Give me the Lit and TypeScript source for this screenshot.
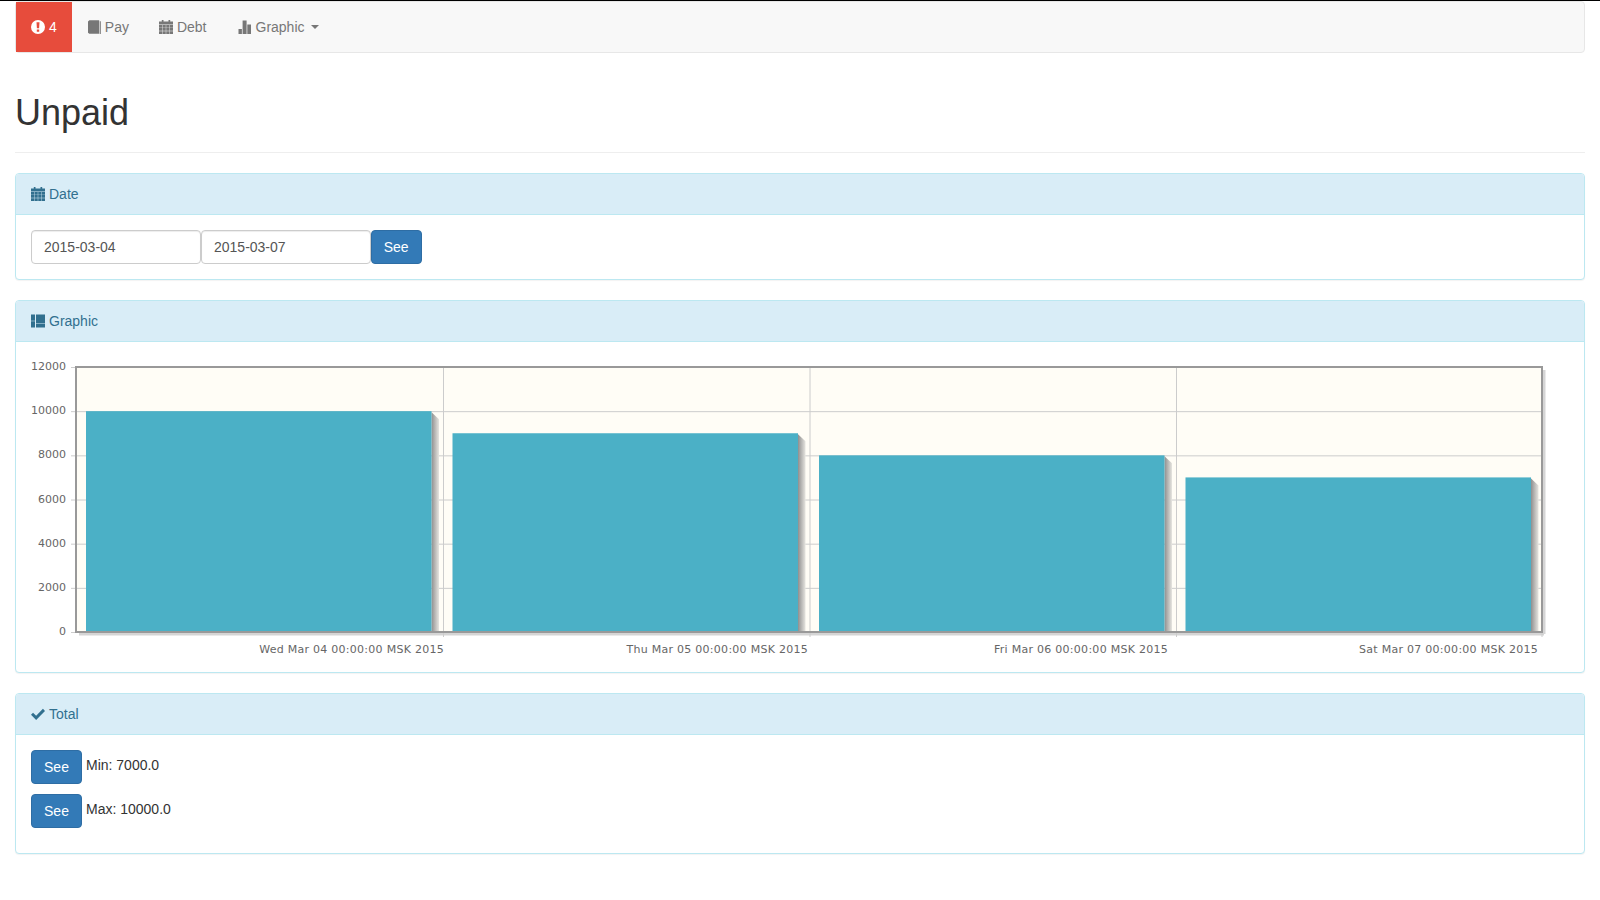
import { LitElement, html, css, svg } from 'lit';
import { customElement } from 'lit/decorators.js';

// icons, drawn to match the reference glyphs
const iconExclaim = html`<svg class="ic" viewBox="0 0 14 14"><path fill-rule="evenodd" d="M7 0a7 7 0 1 0 0 14A7 7 0 0 0 7 0zM5.500 2.300h3l-.4 6H5.900zM5.800 9.400h2.400v2.300H5.800z"/></svg>`;
const iconBook = html`<svg class="ic" viewBox="0 0 14 14"><path d="M1 1.400 2.400.3h9.800v13.400H2.300L1 12.700zM12.800 1.200h1V14h-1z"/></svg>`;
const iconCal = html`<svg class="ic" viewBox="0 0 14 14"><path d="M2.800 0h1.700v1.600h5V0h1.700v1.600H14v2.900H0V1.600h2.800zM0 5h3.300v2.700H0zM3.700 5h3.100v2.700H3.700zM7.200 5h3.100v2.700H7.200zM10.700 5H14v2.700h-3.300zM0 8.100h3.300v2.700H0zM3.700 8.100h3.100v2.700H3.700zM7.200 8.100h3.100v2.700H7.200zM10.700 8.100H14v2.700h-3.300zM0 11.200h3.300V14H0zM3.700 11.200h3.100V14H3.700zM7.200 11.200h3.100V14H7.200zM10.700 11.200H14V14h-3.300z"/></svg>`;
const iconBars = html`<svg class="ic bars" viewBox="0 0 15 14"><path d="M1.500 9h3.400v5H1.500zM5.600 .5h4V14h-4zM10.300 4.500h3.700V14h-3.700z"/></svg>`;
const iconLayout = html`<svg class="ic" viewBox="0 0 14 13"><path d="M0 0h4v6.200H0zM5 0h9v8.400H5zM0 6.800h4V13H0zM5 9h9v4H5z"/></svg>`;
const iconCheck = html`<svg class="ic" viewBox="0 0 15 13"><path d="M5.500 12.800 0 7.300l2.200-2.200 3.300 3.300L12.800 1 15 3.200z"/></svg>`;

const ticks = [12000, 10000, 8000, 6000, 4000, 2000, 0];
const values = [10000, 9000, 8000, 7000];
const dates = [
  { label: 'Wed Mar 04 00:00:00 MSK 2015', x: 444 },
  { label: 'Thu Mar 05 00:00:00 MSK 2015', x: 808 },
  { label: 'Fri Mar 06 00:00:00 MSK 2015', x: 1168 },
  { label: 'Sat Mar 07 00:00:00 MSK 2015', x: 1538 },
];

@customElement('app-root')
export class AppRoot extends LitElement {
  static styles = css`
    :host {
      display: block;
      font-family: 'Liberation Sans', Arial, sans-serif;
      font-size: 14px;
      line-height: 20px;
      color: #333;
      background: #fff;
      border-top: 1px solid #000;
      min-height: 899px;
      box-sizing: border-box;
    }
    .container { padding: 0 15px; }
    .ic { width: 14px; height: 14px; flex: none; fill: currentColor; }
    .ic.bars { width: 15px; }

    nav {
      display: flex;
      height: 52px;
      box-sizing: border-box;
      background: #f8f8f8;
      border: 1px solid #e7e7e7;
      border-radius: 4px;
      margin-bottom: 20px;
    }
    nav a { display: flex; align-items: center; gap: 4px; padding: 0 15px; color: #777; height: 50px; }
    nav a.alert { background: #e74c3c; color: #fff; }
    .caret { width: 0; height: 0; border-top: 4px solid; border-left: 4px solid transparent; border-right: 4px solid transparent; margin-left: 2px; }

    .page-header { margin: 40px 0 20px; padding-bottom: 19px; border-bottom: 1px solid #eee; }
    h1 { margin: 0; font-size: 36px; font-weight: 500; line-height: 40px; color: #333; }

    .panel {
      background: #fff;
      border: 1px solid #bce8f1;
      border-radius: 4px;
      box-shadow: 0 1px 1px rgba(0, 0, 0, 0.05);
      margin-bottom: 20px;
    }
    .panel-heading {
      display: flex;
      align-items: center;
      gap: 4px;
      height: 41px;
      box-sizing: border-box;
      padding: 0 15px;
      background: #d9edf7;
      border-bottom: 1px solid #bce8f1;
      border-radius: 3px 3px 0 0;
      color: #31708f;
    }
    .panel-body { padding: 15px; }
    .chart-body { padding: 0; height: 330px; }
    .chart-body svg { display: block; }

    .date-row { display: flex; }
    .field {
      width: 169.7px;
      height: 34px;
      box-sizing: border-box;
      padding: 6px 12px;
      border: 1px solid #ccc;
      border-radius: 4px;
      box-shadow: inset 0 1px 1px rgba(0, 0, 0, 0.075);
      color: #555;
      background: #fff;
    }
    .field.first { margin-right: 0.3px; }
    button {
      width: 51px;
      height: 34px;
      padding: 0;
      background: #337ab7;
      border: 1px solid #2e6da4;
      border-radius: 4px;
      color: #fff;
      font: inherit;
    }
    .total-body { height: 118px; box-sizing: border-box; }
    .total-row { display: flex; gap: 4px; margin-bottom: 10px; line-height: 30px; height: 34px; }
    svg text { font-family: 'DejaVu Sans', Verdana, sans-serif; font-size: 11px; fill: #666; }
    svg text.date { letter-spacing: 0.27px; }
  `;

  private chart() {
    const y = (v: number) => 632 - (v / 12000) * 265;
    return html`<svg width="1568" height="330" viewBox="16 342 1568 330">
      <defs>
        <linearGradient id="shade">
          <stop offset="0" stop-color="#8f8f8f"/>
          <stop offset="1" stop-color="#e6e5e0"/>
        </linearGradient>
      </defs>
      <rect x="76" y="367" width="1466" height="265" fill="#fffdf6"/>
      <path d="M1544 370v264M79 634h1465" stroke="#d5d5d5" stroke-width="3" fill="none"/>
      ${ticks.map((t) => svg`
        <path d="M71 ${y(t) + 0.5}h5" stroke="#ccc"/>
        ${t > 0 && t < 12000 ? svg`<path d="M76 ${y(t) + 0.5}h1466" stroke="#cccccc"/>` : ''}
        <text x="66" y="${y(t) + 3}" text-anchor="end">${t}</text>
      `)}
      ${[443.5, 810, 1176.5].map((x) => svg`<path d="M${x} 367v265" stroke="#ccc"/>`)}
      ${[443.5, 810, 1176.5, 1542].map((x) => svg`<path d="M${x} 632v5" stroke="#ccc"/>`)}
      ${values.map((v, i) => {
        const x = 86 + i * 366.5;
        const r = x + 345.5;
        return svg`
          <polygon points="${r},${y(v) + 1} ${r + 7.500},${y(v) + 8} ${r + 7.500},632 ${r},632" fill="url(#shade)"/>
          <rect x="${x}" y="${y(v)}" width="345.500" height="${632 - y(v)}" fill="#4bb0c6"/>`;
      })}
      <rect x="76" y="367" width="1466" height="265" fill="none" stroke="#999" stroke-width="2"/>
      ${dates.map((d) => svg`<text class="date" x="${d.x}" y="652.500" text-anchor="end">${d.label}</text>`)}
    </svg>`;
  }

  render() {
    return html`
      <div class="container">
        <nav>
          <a class="alert">${iconExclaim} 4</a>
          <a>${iconBook} Pay</a>
          <a>${iconCal} Debt</a>
          <a>${iconBars} Graphic <span class="caret"></span></a>
        </nav>
        <div class="page-header"><h1>Unpaid</h1></div>

        <div class="panel">
          <div class="panel-heading">${iconCal} Date</div>
          <div class="panel-body date-row">
            <div class="field first">2015-03-04</div>
            <div class="field">2015-03-07</div>
            <button>See</button>
          </div>
        </div>

        <div class="panel">
          <div class="panel-heading">${iconLayout} Graphic</div>
          <div class="panel-body chart-body">${this.chart()}</div>
        </div>

        <div class="panel">
          <div class="panel-heading">${iconCheck} Total</div>
          <div class="panel-body total-body">
            <div class="total-row"><button>See</button><span>Min: 7000.0</span></div>
            <div class="total-row"><button>See</button><span>Max: 10000.0</span></div>
          </div>
        </div>
      </div>
    `;
  }
}
